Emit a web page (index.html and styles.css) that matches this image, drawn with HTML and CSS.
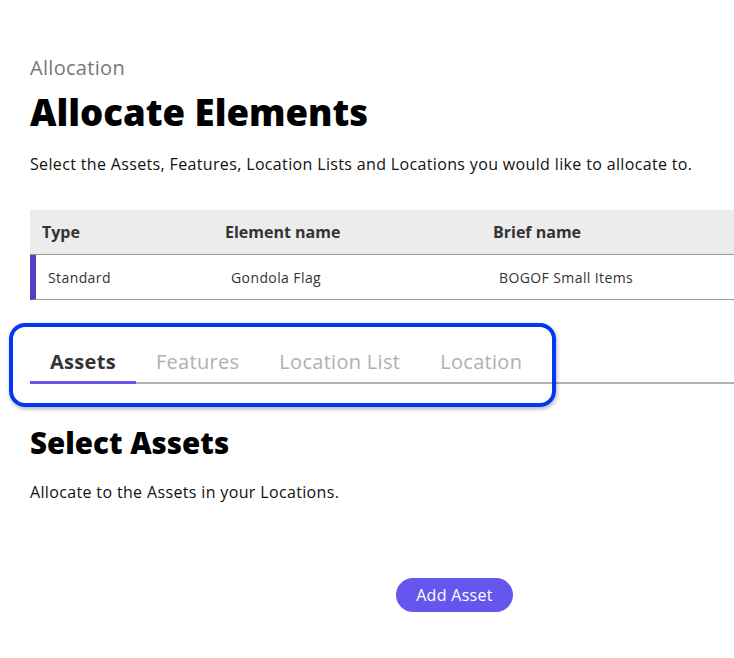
FILE: index.html
```html
<!DOCTYPE html>
<html lang="en">
<head>
<meta charset="utf-8">
<title>Allocate Elements</title>
<link rel="stylesheet" href="styles.css">
</head>
<body>
<main class="page">
  <div class="eyebrow">Allocation</div>
  <h1 class="title">Allocate Elements</h1>
  <p class="lead">Select the Assets, Features, Location Lists and Locations you would like to allocate to.</p>

  <div class="table">
    <div class="thead">
      <div class="c1">Type</div>
      <div class="c2">Element name</div>
      <div class="c3">Brief name</div>
    </div>
    <div class="trow">
      <div class="c1">Standard</div>
      <div class="c2">Gondola Flag</div>
      <div class="c3">BOGOF Small Items</div>
    </div>
  </div>

  <div class="tabs-wrap">
    <nav class="tabs">
      <div class="tab active">Assets</div>
      <div class="tab">Features</div>
      <div class="tab">Location List</div>
      <div class="tab">Location</div>
    </nav>
    <div class="highlight"></div>
  </div>

  <h2 class="subtitle">Select Assets</h2>
  <p class="sublead">Allocate to the Assets in your Locations.</p>

  <div class="actions">
    <button class="btn">Add Asset</button>
  </div>
</main>
</body>
</html>
```

FILE: styles.css
```css
* { box-sizing: border-box; }
html, body { margin: 0; padding: 0; background: #fff; }
body {
  font-family: "Open Sans", "Noto Sans", sans-serif;
  color: #111;
}
.page {
  padding: 56px 0 0 30px;
}
.eyebrow {
  font-size: 20px;
  letter-spacing: 0.3px;
  color: #777;
  line-height: 24px;
}
.title {
  margin: 12px 0 0;
  font-size: 36.5px;
  font-weight: 800;
  line-height: 40px;
  color: #000;
}
.lead {
  margin: 22px 0 0;
  font-size: 16px;
  letter-spacing: 0.35px;
  line-height: 20px;
  color: #111;
}
.table {
  margin-top: 36px;
}
.thead, .trow {
  display: grid;
  grid-template-columns: 183px 268px 1fr;
}
.thead {
  background: #ececec;
  height: 45px;
  align-items: center;
  font-weight: 700;
  font-size: 16px;
  color: #333;
  border-bottom: 1px solid #999;
  padding-left: 12px;
}
.trow {
  height: 45px;
  align-items: center;
  border-left: 6px solid #5040c8;
  border-bottom: 1px solid #999;
  padding-left: 12px;
  font-size: 14px;
  letter-spacing: 0.4px;
  color: #333;
}
.tabs-wrap {
  position: relative;
  margin-top: 36px;
}
.tabs {
  display: flex;
  border-bottom: 2px solid #b3b3b3;
  height: 48px;
}
.tab {
  padding: 12px 20px 0;
  font-size: 20px;
  letter-spacing: 0.3px;
  color: #b0b0b0;
  margin-bottom: -2px;
}
.tab.active {
  color: #333;
  font-weight: 700;
  border-bottom: 3px solid #6556ee;
}
.highlight {
  position: absolute;
  left: -21px;
  top: -13px;
  width: 547px;
  height: 84px;
  border: 4px solid #0037f5;
  border-radius: 16px;
  box-shadow: 1px 2px 4px rgba(0,0,0,0.3);
  pointer-events: none;
}
.subtitle {
  margin: 42px 0 0;
  font-size: 29.5px;
  font-weight: 800;
  line-height: 34px;
  color: #000;
}
.sublead {
  margin: 22px 0 0;
  font-size: 16px;
  letter-spacing: 0.35px;
  line-height: 20px;
  color: #111;
}
.actions {
  margin-top: 76px;
  padding-left: 366px;
}
.btn {
  font-family: inherit;
  background: #6556ee;
  color: #fff;
  border: 0;
  border-radius: 17px;
  height: 34px;
  width: 117px;
  font-size: 16px;
  letter-spacing: 0.3px;
  padding: 0;
}
```
